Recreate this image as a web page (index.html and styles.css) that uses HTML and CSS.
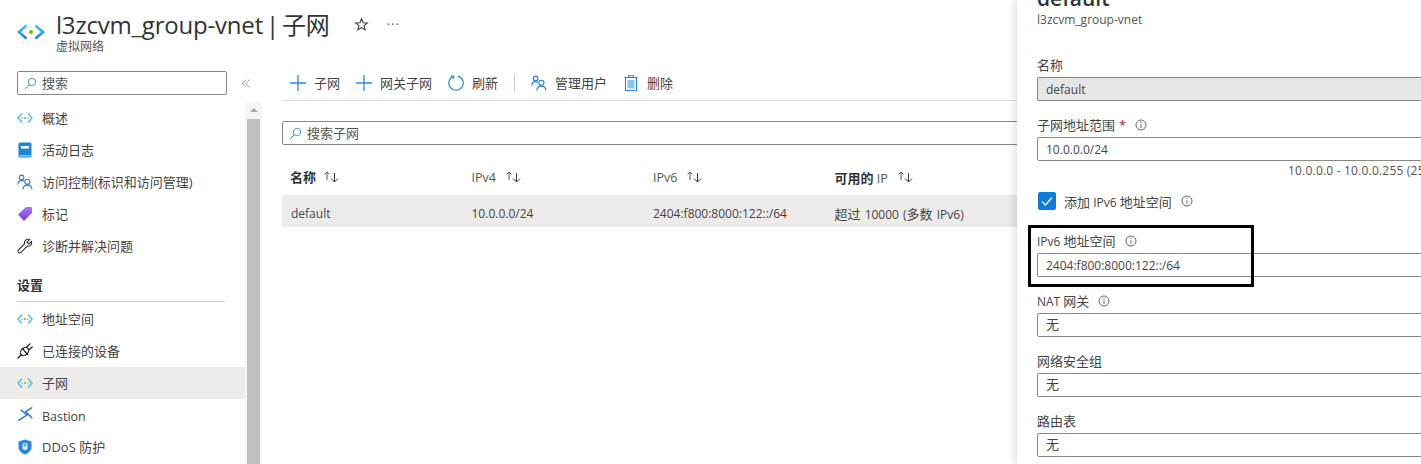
FILE: index.html
```html
<!DOCTYPE html>
<html lang="zh-CN">
<head>
    <meta charset="UTF-8">
    <title>l3zcvm_group-vnet | 子网</title>
    <link rel="stylesheet" href="styles.css">
</head>
<body>
    <svg class="icon-defs" aria-hidden="true">
        <defs>
            <linearGradient id="chev" x1="0" y1="0" x2="0" y2="1">
                <stop offset="0" stop-color="#4fc3f2"/>
                <stop offset="1" stop-color="#1380d8"/>
            </linearGradient>
            <linearGradient id="tag" x1="0" y1="0" x2="0" y2="1">
                <stop offset="0" stop-color="#a67af4"/>
                <stop offset="1" stop-color="#773adc"/>
            </linearGradient>
        </defs>
        <symbol id="i-vnet" viewBox="0 0 16 12">
            <path d="M5 1.500 1 6l4 4.500M11 1.500 15 6l-4 4.500" fill="none" stroke="#50c0f0" stroke-width="1.500"/>
            <circle cx="5.200" cy="6" r=".9" fill="#a8d878"/>
            <circle cx="8" cy="6" r="1" fill="#7fba00"/>
            <circle cx="10.800" cy="6" r=".9" fill="#a8d878"/>
        </symbol>
        <symbol id="i-search" viewBox="0 0 16 16">
            <circle cx="9.800" cy="6.200" r="4.600" fill="none" stroke="#2b88d8" stroke-width="1.100"/>
            <path d="M6.500 9.500 1.500 14.500" stroke="#2b88d8" stroke-width="1.200"/>
        </symbol>
        <symbol id="i-people" viewBox="0 0 16 16">
            <circle cx="4.600" cy="3.400" r="2.300" fill="none" stroke="#2b7fd0" stroke-width="1.100"/>
            <path d="M.8 10.500C1 7.800 2.800 6.600 4.600 6.600c1 0 1.700.2 2.400.8" fill="none" stroke="#2b7fd0" stroke-width="1.100"/>
            <circle cx="10.400" cy="7.800" r="2.600" fill="none" stroke="#2b7fd0" stroke-width="1.100"/>
            <path d="M5.800 15.500c.3-2.800 2.300-4.400 4.600-4.400s4.300 1.600 4.600 4.400" fill="none" stroke="#2b7fd0" stroke-width="1.100"/>
        </symbol>
        <symbol id="i-sort" viewBox="0 0 16 12">
            <path d="M4 9V1M1.500 3.500 4 1l2.500 2.500" fill="none" stroke="#555" stroke-width="1"/>
            <path d="M11.500 2v9M8 7.500l3.500 3.500L15 7.500" fill="none" stroke="#333" stroke-width="1"/>
        </symbol>
        <symbol id="i-plus" viewBox="0 0 16 16">
            <path d="M8 0v16M0 8h16" stroke="#2b88d8" stroke-width="1.300"/>
        </symbol>
        <symbol id="i-info" viewBox="0 0 12 12">
            <circle cx="6" cy="6" r="5" fill="none" stroke="#666" stroke-width="1"/>
            <path d="M6 5.200V9" stroke="#666" stroke-width="1"/>
            <circle cx="6" cy="3.500" r=".7" fill="#666"/>
        </symbol>
    </svg>

    <header class="page-header">
        <svg class="header-icon" viewBox="0 0 28 16">
            <path d="M9.500 1.500 2 8l7.500 6.500M18.500 1.500 26 8l-7.500 6.500" fill="none" stroke="url(#chev)" stroke-width="2.600"/>
            <circle cx="14" cy="8" r="2" fill="#7fba00"/>
        </svg>
        <div class="header-text">
            <h1>l3zcvm_group-vnet | 子网</h1>
            <div class="header-sub">虚拟网络</div>
        </div>
        <svg class="star" viewBox="0 0 16 16">
            <path d="M8 1.800 9.700 6.200l4.600.2-3.600 2.900 1.200 4.500L8 11.300l-3.900 2.500 1.200-4.500L1.700 6.400l4.600-.2z" fill="none" stroke="#333" stroke-width="1.100"/>
        </svg>
        <div class="more">···</div>
    </header>

    <div class="layout">
        <aside class="sidebar">
            <div class="side-search-row">
                <div class="search-box side-search">
                    <svg class="search-icon"><use href="#i-search"/></svg>
                    <span>搜索</span>
                </div>
                <svg class="collapse" viewBox="0 0 8 9">
                    <path d="M4 .5.5 4.500l3.500 4M7.500.5 4 4.500l3.500 4" fill="none" stroke="#888" stroke-width=".8"/>
                </svg>
            </div>
            <div class="side-scroll">
                <nav class="side-nav">
                    <a class="nav-item"><svg class="nav-icon"><use href="#i-vnet"/></svg>概述</a>
                    <a class="nav-item">
                        <svg class="nav-icon" viewBox="0 0 16 16">
                            <rect x="1.500" y="0.500" width="13" height="15" rx="1.500" fill="#1c86d8"/>
                            <rect x="4" y="4" width="8" height="2.500" fill="#fff"/>
                            <rect x="2.500" y="13" width="11" height="1.500" fill="#8ccbf5"/>
                        </svg>活动日志</a>
                    <a class="nav-item"><svg class="nav-icon"><use href="#i-people"/></svg>访问控制(标识和访问管理)</a>
                    <a class="nav-item">
                        <svg class="nav-icon" viewBox="0 0 16 16">
                            <path d="M9 1h5a1 1 0 0 1 1 1v5l-8 8-6-6.500z" fill="url(#tag)"/>
                        </svg>标记</a>
                    <a class="nav-item">
                        <svg class="nav-icon" viewBox="0 0 16 16">
                            <path d="M14.500 3.500 11.800 6 10 4.300l2.500-2.800C10.500.7 8.300 1.500 7.700 3.400c-.2.800-.2 1.500.1 2.200L1.500 12a1.700 1.700 0 0 0 2.400 2.400l6.400-6.300c2.300.8 4.900-1.200 4.200-4.600z" fill="none" stroke="#333" stroke-width="1.100"/>
                        </svg>诊断并解决问题</a>

                    <div class="nav-section">设置</div>

                    <a class="nav-item"><svg class="nav-icon"><use href="#i-vnet"/></svg>地址空间</a>
                    <a class="nav-item">
                        <svg class="nav-icon" viewBox="0 0 16 16">
                            <g fill="none" stroke="#222" stroke-width="1.200">
                                <ellipse cx="7.500" cy="8.500" rx="3.400" ry="4.600" transform="rotate(45 7.500 8.500)"/>
                                <path d="M.5 15.500 4.500 11.500M5 5 11 12M9.500 4 13.500.5M12 7l3.500-3.500"/>
                            </g>
                        </svg>已连接的设备</a>
                    <a class="nav-item is-active"><svg class="nav-icon"><use href="#i-vnet"/></svg>子网</a>
                    <a class="nav-item">
                        <svg class="nav-icon" viewBox="0 0 16 16">
                            <path d="M3.700 2.700 10 8l-8.700 5.700M15.300 .5 8.700 4.700l6.600 6.600" fill="none" stroke="#2a72c4" stroke-width="1.400"/>
                        </svg><span class="latin-text">Bastion</span></a>
                    <a class="nav-item">
                        <svg class="nav-icon" viewBox="0 0 16 16">
                            <path d="M8 .5 14.500 2.500V8c0 3.500-2.800 6.200-6.500 7.500C4.300 14.200 1.500 11.500 1.500 8V2.500z" fill="#2b88d8"/>
                            <rect x="5.500" y="4" width="5" height="7" rx="2" fill="#d6ecfb"/>
                            <rect x="7.300" y="5" width="1.400" height="2.500" fill="#2b88d8"/>
                        </svg>DDoS 防护</a>
                </nav>
                <div class="scrollbar">
                    <div class="scroll-up"></div>
                    <div class="scroll-thumb"></div>
                </div>
            </div>
        </aside>

        <main class="content">
            <div class="toolbar">
                <div class="tool"><svg class="tool-icon"><use href="#i-plus"/></svg>子网</div>
                <div class="tool"><svg class="tool-icon"><use href="#i-plus"/></svg>网关子网</div>
                <div class="tool">
                    <svg class="tool-icon" viewBox="0 0 16 16">
                        <path d="M5.500 1.300a7.200 7.200 0 1 0 4.500-.2" fill="none" stroke="#2b88d8" stroke-width="1.200"/>
                        <path d="M2.800 .8 5.800 1.300 5 4.200" fill="none" stroke="#2b88d8" stroke-width="1.200"/>
                    </svg>刷新</div>
                <div class="tool-sep"></div>
                <div class="tool"><svg class="tool-icon"><use href="#i-people"/></svg>管理用户</div>
                <div class="tool">
                    <svg class="tool-icon" viewBox="0 0 16 16">
                        <path d="M1.500 2.500h13M5.500 2.500V.8h5v1.700" fill="none" stroke="#2b88d8" stroke-width="1.100"/>
                        <rect x="2.500" y="2.500" width="11" height="13" fill="none" stroke="#2b88d8" stroke-width="1.100"/>
                        <rect x="4.500" y="5" width="7" height="8.500" fill="#8cc4ee"/>
                    </svg>删除</div>
            </div>

            <div class="search-box table-search">
                <svg class="search-icon"><use href="#i-search"/></svg>
                <span>搜索子网</span>
            </div>

            <div class="grid-row grid-head">
                <div class="cell"><b class="name-head">名称</b><svg class="sort"><use href="#i-sort"/></svg></div>
                <div class="cell">IPv4<svg class="sort"><use href="#i-sort"/></svg></div>
                <div class="cell">IPv6<svg class="sort"><use href="#i-sort"/></svg></div>
                <div class="cell"><span><b>可用的</b> IP</span><svg class="sort"><use href="#i-sort"/></svg></div>
            </div>
            <div class="grid-row grid-data">
                <div class="cell name-cell">default</div>
                <div class="cell">10.0.0.0/24</div>
                <div class="cell">2404:f800:8000:122::/64</div>
                <div class="cell"><span class="avail"><span class="zh">超过</span> 10000 (<span class="zh">多数</span> IPv6)</span></div>
            </div>
        </main>
    </div>

    <section class="blade">
        <h2>default</h2>
        <div class="blade-sub">l3zcvm_group-vnet</div>

        <div class="field">
            <label><span class="zh">名称</span></label>
            <div class="input is-disabled">default</div>
        </div>
        <div class="field has-hint">
            <label><span class="zh">子网地址范围</span><span class="req">*</span><svg class="info"><use href="#i-info"/></svg></label>
            <div class="input">10.0.0.0/24</div>
        </div>
        <div class="hint">10.0.0.0 - 10.0.0.255 (256 个地址)</div>
        <div class="check-row">
            <svg class="checkbox" viewBox="0 0 18 18">
                <rect width="18" height="18" rx="2" fill="#0f7bd7"/>
                <path d="M4 9.500 7.500 13 14 5.500" fill="none" stroke="#fff" stroke-width="1.200"/>
            </svg>
            <span><span class="zh">添加</span> IPv6 <span class="zh">地址空间</span></span>
            <svg class="info"><use href="#i-info"/></svg>
        </div>
        <div class="field">
            <label><span>IPv6 <span class="zh">地址空间</span></span><svg class="info"><use href="#i-info"/></svg></label>
            <div class="input">2404:f800:8000:122::/64</div>
        </div>
        <div class="field">
            <label><span>NAT <span class="zh">网关</span></span><svg class="info"><use href="#i-info"/></svg></label>
            <div class="input"><span class="zh none">无</span></div>
        </div>
        <div class="field">
            <label><span class="zh">网络安全组</span></label>
            <div class="input"><span class="zh none">无</span></div>
        </div>
        <div class="field">
            <label><span class="zh">路由表</span></label>
            <div class="input"><span class="zh none">无</span></div>
        </div>
        <div class="callout"></div>
    </section>
</body>
</html>
```

FILE: styles.css
```css
html, body {
    margin: 0;
    padding: 0;
    height: 100%;
    overflow: hidden;
    background: #fff;
    color: #444;
    font-family: "Open Sans", "Noto Sans CJK SC", sans-serif;
    font-size: 12px;
}
.icon-defs {
    position: absolute;
    width: 0;
    height: 0;
}
.zh {
    font-size: 13px;
}

/* page header */
.page-header {
    display: flex;
    align-items: flex-start;
    height: 66px;
    padding: 10px 0 0 17px;
    box-sizing: border-box;
}
.header-icon {
    width: 28px;
    height: 16px;
    margin: 14px 11px 0 0;
    flex: none;
}
h1 {
    margin: 0;
    font-size: 24px;
    font-weight: 400;
    line-height: 30px;
    letter-spacing: -0.2px;
    word-spacing: -3px;
    color: #333;
    white-space: nowrap;
}
.header-sub {
    margin-top: 1px;
    font-size: 12px;
    line-height: 12px;
    color: #555;
}
.star {
    width: 15px;
    height: 15px;
    margin: 7px 0 0 24px;
}
.more {
    margin: 4px 0 0 18px;
    font-size: 13px;
    line-height: 20px;
    letter-spacing: 1px;
    color: #555;
}

.layout {
    display: flex;
    height: 398px;
}

/* left menu */
.sidebar {
    width: 262px;
    flex: none;
    display: flex;
    flex-direction: column;
}
.side-search-row {
    display: flex;
    align-items: center;
    padding: 5px 0 7px 17px;
}
.search-box {
    display: flex;
    align-items: center;
    box-sizing: border-box;
    height: 24px;
    border: 1px solid #8a8886;
    border-radius: 2px;
    font-size: 13px;
    color: #555;
}
.search-box span {
    padding-bottom: 2px;
}
.side-search {
    width: 210px;
}
.search-icon {
    width: 13px;
    height: 13px;
    margin: 0 5px 0 6px;
    flex: none;
}
.collapse {
    width: 8px;
    height: 9px;
    margin-left: 15px;
}
.side-scroll {
    display: flex;
    flex: 1;
    min-height: 0;
}
.side-nav {
    width: 245px;
    flex: none;
}
.nav-item {
    display: flex;
    align-items: center;
    box-sizing: border-box;
    height: 32px;
    padding: 0 0 2px 17px;
    font-size: 13px;
    color: #444;
    white-space: nowrap;
}
.nav-item.is-active {
    background: #edebe9;
}
.nav-icon {
    width: 16px;
    height: 16px;
    margin: 2px 9px 0 0;
    flex: none;
}
.latin-text {
    padding-top: 4px;
    font-size: 12.5px;
}
.nav-section {
    margin: 0 20px 1px 17px;
    padding: 15px 0 7px;
    border-bottom: 1px solid #ccc;
    font-size: 13px;
    line-height: 17px;
    font-weight: 600;
    color: #333;
}
.scrollbar {
    width: 17px;
    background: #f5f5f5;
    padding: 0 2px;
    box-sizing: border-box;
}
.scroll-up {
    height: 17px;
    position: relative;
}
.scroll-up::after {
    content: "";
    position: absolute;
    left: 3px;
    top: 6px;
    border-left: 4px solid transparent;
    border-right: 4px solid transparent;
    border-bottom: 4px solid #a8a8a8;
}
.scroll-thumb {
    height: 345px;
    background: #c1c1c1;
}

/* main list */
.content {
    flex: 1;
    padding-left: 20px;
}
.toolbar {
    display: flex;
    align-items: center;
    gap: 16px;
    height: 34px;
    padding-left: 8px;
    border-bottom: 1px solid #ddd;
    font-size: 13px;
}
.tool {
    display: flex;
    align-items: center;
    gap: 8px;
    padding-bottom: 2px;
    white-space: nowrap;
}
.tool-icon {
    width: 16px;
    height: 16px;
    margin-top: 2px;
    flex: none;
}
.tool-sep {
    width: 1px;
    height: 18px;
    background: #ccc;
}
.table-search {
    margin-top: 20px;
}
.grid-row {
    display: grid;
    grid-template-columns: repeat(4, 181.5px);
    align-items: center;
}
.cell {
    display: flex;
    align-items: center;
    padding-left: 8px;
    white-space: pre;
}
.grid-head {
    height: 36px;
    margin-top: 14px;
    font-size: 12.5px;
    color: #555;
}
.grid-head b {
    font-weight: 700;
    font-size: 13px;
    color: #333;
}
.grid-head .name-head {
    padding-bottom: 2px;
}
.name-head + .sort {
    margin-left: 7px;
}
.sort {
    width: 16px;
    height: 12px;
    margin-left: 9px;
}
.grid-data {
    box-sizing: border-box;
    height: 32px;
    padding-top: 4px;
    background: #edebe9;
}
.name-cell {
    padding-left: 9px;
    color: #3b4a60;
}
.avail {
    word-spacing: 1px;
}

/* subnet blade on the right */
.blade {
    position: absolute;
    top: 0;
    left: 1017px;
    width: 404px;
    height: 464px;
    padding-left: 20px;
    box-sizing: border-box;
    background: #fff;
    box-shadow: -3px 0 7px rgba(0, 0, 0, 0.12);
    overflow: hidden;
}
h2 {
    margin: -16px 0 0;
    font-size: 21px;
    font-weight: 600;
    line-height: 28px;
    color: #333;
}
.blade-sub {
    margin: 0 0 27px;
    font-size: 12px;
    line-height: 16px;
    color: #555;
}
.field {
    margin-bottom: 14px;
}
.field.has-hint {
    margin-bottom: 0;
}
.field label {
    display: flex;
    align-items: center;
    box-sizing: border-box;
    height: 20px;
    padding-bottom: 1px;
    margin-bottom: 2px;
    color: #444;
    white-space: pre;
}
.req {
    margin-left: 4px;
    font-size: 13px;
    color: #a4262c;
}
.info {
    width: 12px;
    height: 12px;
    margin-left: 9px;
    flex: none;
}
.input {
    display: flex;
    align-items: center;
    box-sizing: border-box;
    width: 420px;
    height: 24px;
    padding-left: 8px;
    border: 1px solid #8a8886;
    border-radius: 2px;
    color: #444;
}
.input .none {
    padding-bottom: 3px;
}
.input.is-disabled {
    background: #e6e6e6;
}
.hint {
    height: 20px;
    margin: 0 0 10px 251px;
    line-height: 20px;
    letter-spacing: 0.2px;
    white-space: nowrap;
    color: #555;
}
.check-row {
    display: flex;
    align-items: center;
    height: 20px;
    margin-bottom: 20px;
    padding-left: 1px;
    white-space: nowrap;
}
.checkbox {
    width: 18px;
    height: 18px;
    margin-right: 8px;
    flex: none;
}
.callout {
    position: absolute;
    left: 11px;
    top: 225px;
    width: 226px;
    height: 62px;
    box-sizing: border-box;
    border: 3px solid #000;
}
```
